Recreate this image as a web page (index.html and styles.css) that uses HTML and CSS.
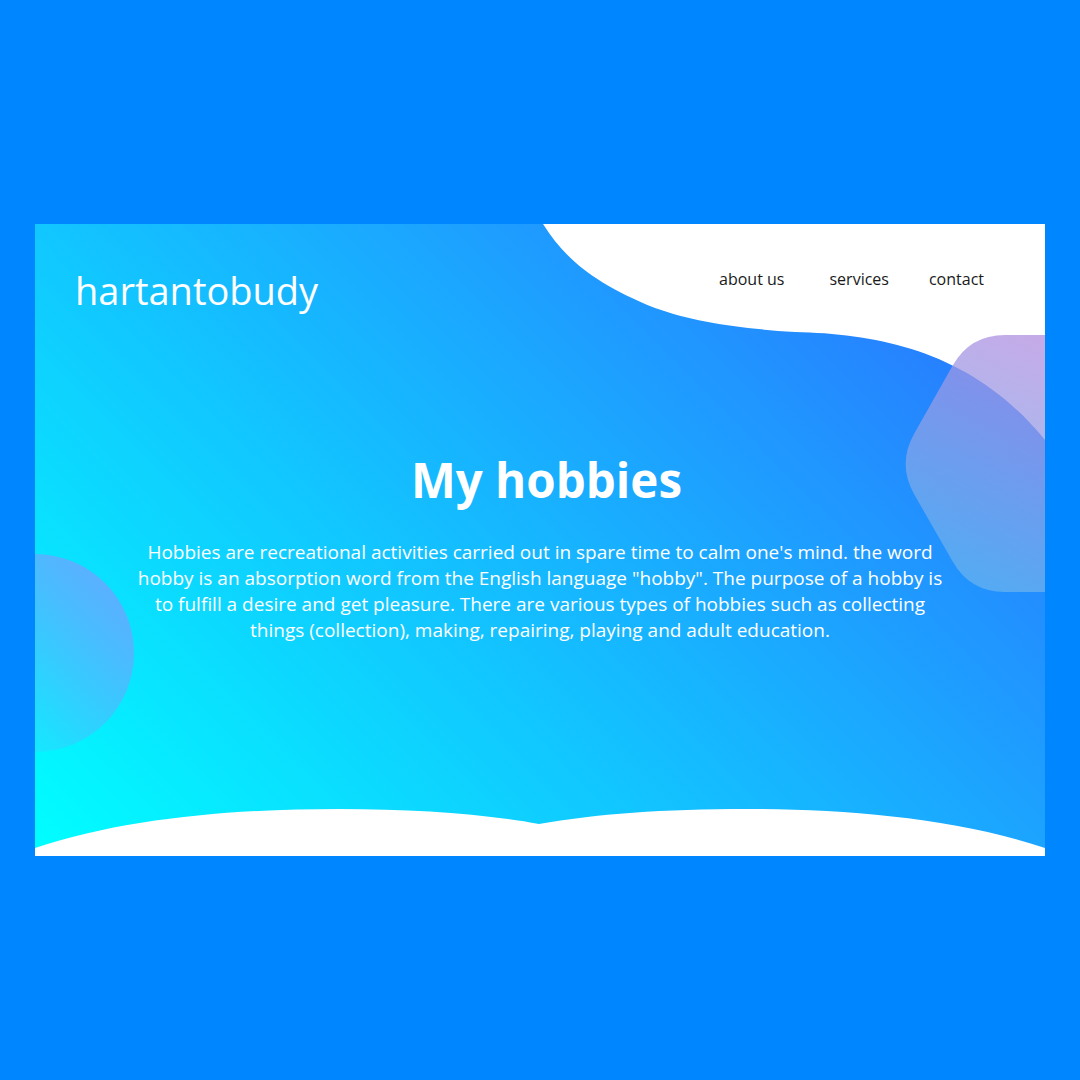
FILE: index.html
```html
<!DOCTYPE html>
<html lang="en">
<head>
<meta charset="utf-8">
<title>hartantobudy</title>
<link rel="stylesheet" href="styles.css">
</head>
<body>
<div class="card">
  <svg class="decor" viewBox="0 0 1010 632" preserveAspectRatio="none" aria-hidden="true">
    <defs>
      <linearGradient id="circleGrad" x1="1" y1="0" x2="0" y2="1">
        <stop offset="0" stop-color="#6fa4ff" stop-opacity="0.95"/>
        <stop offset="0.9" stop-color="#6fa4ff" stop-opacity="0"/>
      </linearGradient>
      <linearGradient id="hexGrad" gradientUnits="userSpaceOnUse" x1="1010" y1="111" x2="900" y2="368">
        <stop offset="0" stop-color="#b38ee0"/>
        <stop offset="1" stop-color="#5fb6f0"/>
      </linearGradient>
    </defs>
    <path class="blob" d="M508,0 C530,35 560,60 620,84 C660,98 700,104 760,108 C850,110 940,130 1010,216 L1010,0 Z"/>
    <circle cx="0" cy="429" r="99" fill="url(#circleGrad)"/>
    <path d="M1100,111 L970,111 Q935,111 917.7,141.5 L879.3,209.5 Q862,240 879.3,270.5 L917.7,337.5 Q935,368 970,368 L1100,368 Z" fill="url(#hexGrad)" opacity="0.75"/>
    <path class="blob" d="M0,624 C90,594 200,585 304,585 C380,585 450,590 504,600 C560,590 630,585 711,585 C810,585 920,594 1010,624 L1010,632 L0,632 Z"/>
  </svg>
  <header class="header">
    <div class="logo">hartantobudy</div>
    <nav class="nav">
      <a class="nav-link nav-link-first" href="#">about us</a>
      <a class="nav-link" href="#">services</a>
      <a class="nav-link" href="#">contact</a>
    </nav>
  </header>
  <main class="hero">
    <h1 class="title">My hobbies</h1>
    <p class="text">Hobbies are recreational activities carried out in spare time to calm one's mind. the word hobby is an absorption word from the English language "hobby". The purpose of a hobby is to fulfill a desire and get pleasure. There are various types of hobbies such as collecting things (collection), making, repairing, playing and adult education.</p>
  </main>
</div>
</body>
</html>
```

FILE: styles.css
```css
html, body {
  margin: 0;
  padding: 0;
}
body {
  width: 1080px;
  height: 1080px;
  background: #0086ff;
  display: flex;
  align-items: center;
  justify-content: center;
  font-family: "Open Sans", "Liberation Sans", sans-serif;
}
.card {
  position: relative;
  width: 1010px;
  height: 632px;
  overflow: hidden;
  background: linear-gradient(45deg, #00ffff 0%, #2d6cff 100%);
  box-sizing: border-box;
  padding-top: 41px;
}
.decor {
  position: absolute;
  left: 0;
  top: 0;
  width: 1010px;
  height: 632px;
  z-index: 0;
}
.blob {
  fill: #ffffff;
}
.header {
  position: relative;
  z-index: 1;
  display: flex;
  justify-content: space-between;
  align-items: flex-start;
  padding: 0 61px 0 40px;
}
.logo {
  font-size: 38px;
  line-height: 50px;
  font-weight: 400;
  color: #ffffff;
}
.nav {
  display: flex;
  gap: 40px;
  padding-top: 3px;
}
.nav-link {
  font-size: 16px;
  line-height: 22px;
  color: #1a1a1a;
  text-decoration: none;
}
.nav-link-first {
  margin-right: 5px;
}
.hero {
  position: relative;
  z-index: 1;
  display: flex;
  flex-direction: column;
  align-items: center;
  margin-top: 136px;
  color: #ffffff;
  text-align: center;
}
.title {
  margin: 0;
  padding-left: 13px;
  font-size: 47.5px;
  line-height: 58px;
  font-weight: 700;
}
.text {
  margin: 30px 0 0;
  width: 818px;
  font-size: 19px;
  line-height: 26px;
  font-weight: 400;
}
```
